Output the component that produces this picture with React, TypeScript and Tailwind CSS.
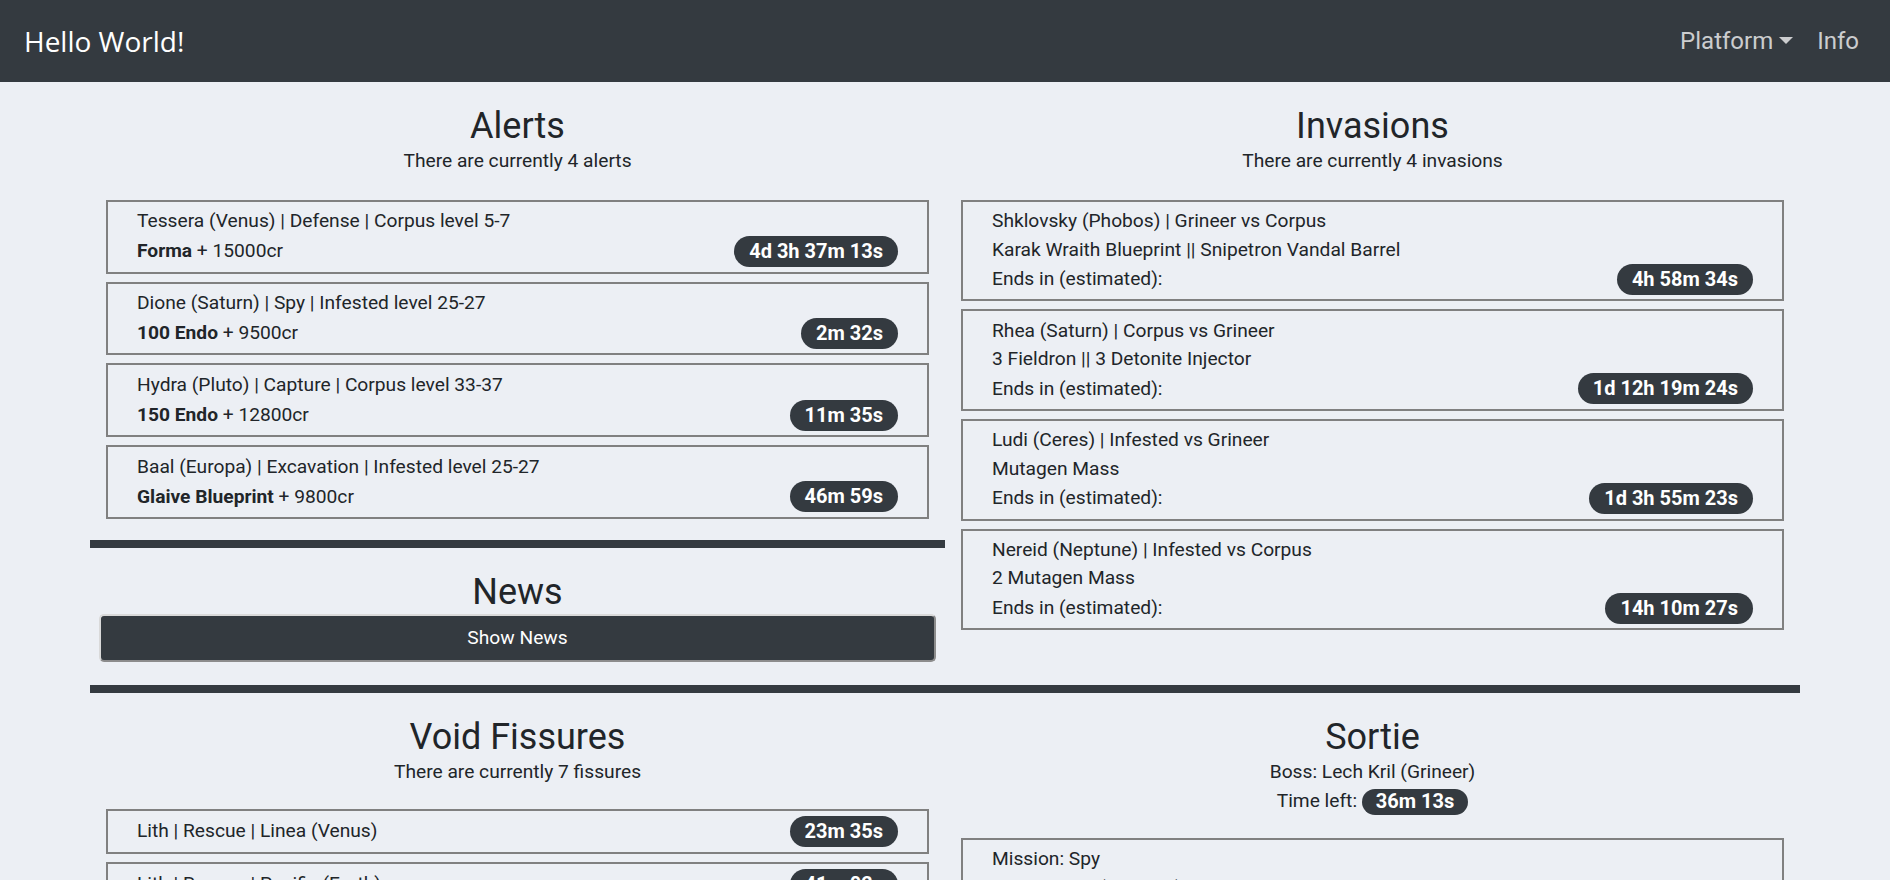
import React from "react";

type Alert = { node: string; reward: string; credits: string; time: string };
type Invasion = { node: string; rewards: string; time: string };
type Fissure = { label: string; time: string };

const alerts: Alert[] = [
  { node: "Tessera (Venus) | Defense | Corpus level 5-7", reward: "Forma", credits: "15000cr", time: "4d 3h 37m 13s" },
  { node: "Dione (Saturn) | Spy | Infested level 25-27", reward: "100 Endo", credits: "9500cr", time: "2m 32s" },
  { node: "Hydra (Pluto) | Capture | Corpus level 33-37", reward: "150 Endo", credits: "12800cr", time: "11m 35s" },
  { node: "Baal (Europa) | Excavation | Infested level 25-27", reward: "Glaive Blueprint", credits: "9800cr", time: "46m 59s" },
];

const invasions: Invasion[] = [
  { node: "Shklovsky (Phobos) | Grineer vs Corpus", rewards: "Karak Wraith Blueprint || Snipetron Vandal Barrel", time: "4h 58m 34s" },
  { node: "Rhea (Saturn) | Corpus vs Grineer", rewards: "3 Fieldron || 3 Detonite Injector", time: "1d 12h 19m 24s" },
  { node: "Ludi (Ceres) | Infested vs Grineer", rewards: "Mutagen Mass", time: "1d 3h 55m 23s" },
  { node: "Nereid (Neptune) | Infested vs Corpus", rewards: "2 Mutagen Mass", time: "14h 10m 27s" },
];

const fissures: Fissure[] = [
  { label: "Lith | Rescue | Linea (Venus)", time: "23m 35s" },
  { label: "Lith | Rescue | Pacific (Earth)", time: "41m 02s" },
  { label: "Meso | Defense | Tethys (Saturn)", time: "52m 18s" },
  { label: "Meso | Survival | Ophelia (Uranus)", time: "1h 4m 9s" },
  { label: "Neo | Exterminate | Cypress (Pluto)", time: "1h 20m 44s" },
  { label: "Axi | Interception | Xini (Eris)", time: "1h 37m 5s" },
  { label: "Axi | Defense | Kala-azar (Eris)", time: "1h 51m 30s" },
];

const sortie = [
  { mission: "Spy", node: "Lares (Mercury)", modifier: "Enemy Elemental Enhancement: Heat" },
  { mission: "Defense", node: "Tessera (Venus)", modifier: "Eximus Stronghold" },
  { mission: "Assassination", node: "Tikal (Earth)", modifier: "Augmented Enemy Armor" },
];

function Badge({ children, small }: { children: React.ReactNode; small?: boolean }) {
  return (
    <span
      className={
        small
          ? "inline-block rounded-full bg-[#343a40] px-[14px] py-[2.5px] align-middle text-[20px] font-bold leading-[21px] text-white"
          : "inline-block rounded-full bg-[#343a40] px-[15px] py-[5px] text-[20px] font-bold leading-[21px] text-white"
      }
    >
      {children}
    </span>
  );
}

function Card({ children, first }: { children: React.ReactNode; first?: boolean }) {
  return (
    <div className={`${first ? "" : "mt-2"} mx-4 border-2 border-[#808080] px-[29px] pt-[5.5px] pb-[4.5px]`}>
      {children}
    </div>
  );
}

function Header({ title, lines }: { title: string; lines: React.ReactNode[] }) {
  return (
    <div className="pt-[23px] text-center">
      <h2 className="text-[36px] leading-[42px]">{title}</h2>
      {lines.map((l, i) => (
        <p key={i}>{l}</p>
      ))}
    </div>
  );
}

const Bar = ({ className }: { className: string }) => <div className={`h-2 bg-[#343a40] ${className}`} />;

export default function App() {
  return (
    <div className="min-h-screen bg-[#eceff4] font-[Roboto,sans-serif] text-[19.2px] leading-[28.8px] text-[#212529]">
      <nav className="flex h-[82px] items-center justify-between bg-[#343a40] pl-[24px] pr-[19px]">
        <span className="font-['Open_Sans',sans-serif] text-[28px] text-white">Hello World!</span>
        <div className="flex items-center text-[24px] text-white/75">
          <span className="px-[12px]">
            Platform
            <span className="ml-[6px] inline-block border-x-[7px] border-t-[7px] border-x-transparent border-t-current align-[0.2em]" />
          </span>
          <span className="px-[12px]">Info</span>
        </div>
      </nav>

      <main className="px-[90px] pb-10">
        <div className="grid grid-cols-2">
          <section>
            <Header title="Alerts" lines={["There are currently 4 alerts"]} />
            <div className="mt-[24px]">
              {alerts.map((a, i) => (
                <Card key={a.node} first={i === 0}>
                  <div>{a.node}</div>
                  <div className="flex items-center justify-between">
                    <span>
                      <b>{a.reward}</b> + {a.credits}
                    </span>
                    <Badge>{a.time}</Badge>
                  </div>
                </Card>
              ))}
            </div>
            <Bar className="mt-[21px]" />
            <div className="mt-[23px] text-center">
              <h2 className="text-[36px] leading-[42px]">News</h2>
            </div>
            <button className="mx-[9px] mt-[1px] block w-[calc(100%-18px)] rounded-[5px] border-2 border-t-[#d9d9d9] border-l-[#d9d9d9] border-r-[#8c8c8c] border-b-[#8c8c8c] bg-[#343a40] py-[7.6px] text-center text-white">
              Show News
            </button>
          </section>

          <section>
            <Header title="Invasions" lines={["There are currently 4 invasions"]} />
            <div className="mt-[24px] leading-[28.3px]">
              {invasions.map((v, i) => (
                <Card key={v.node} first={i === 0}>
                  <div>{v.node}</div>
                  <div>{v.rewards}</div>
                  <div className="flex items-center justify-between">
                    <span>Ends in (estimated):</span>
                    <Badge>{v.time}</Badge>
                  </div>
                </Card>
              ))}
            </div>
          </section>
        </div>

        <Bar className="mt-[23px]" />

        <div className="grid grid-cols-2">
          <section>
            <Header title="Void Fissures" lines={["There are currently 7 fissures"]} />
            <div className="mt-[22px]">
              {fissures.map((f, i) => (
                <Card key={f.label} first={i === 0}>
                  <div className="flex items-center justify-between">
                    <span>{f.label}</span>
                    <Badge>{f.time}</Badge>
                  </div>
                </Card>
              ))}
            </div>
          </section>

          <section>
            <Header
              title="Sortie"
              lines={[
                "Boss: Lech Kril (Grineer)",
                <>
                  Time left: <Badge small>36m 13s</Badge>
                </>,
              ]}
            />
            <div className="mt-[22px]">
              {sortie.map((s, i) => (
                <Card key={s.mission} first={i === 0}>
                  <div>Mission: {s.mission}</div>
                  <div>Node: {s.node}</div>
                  <div>Modifier: {s.modifier}</div>
                </Card>
              ))}
            </div>
          </section>
        </div>
      </main>
    </div>
  );
}
